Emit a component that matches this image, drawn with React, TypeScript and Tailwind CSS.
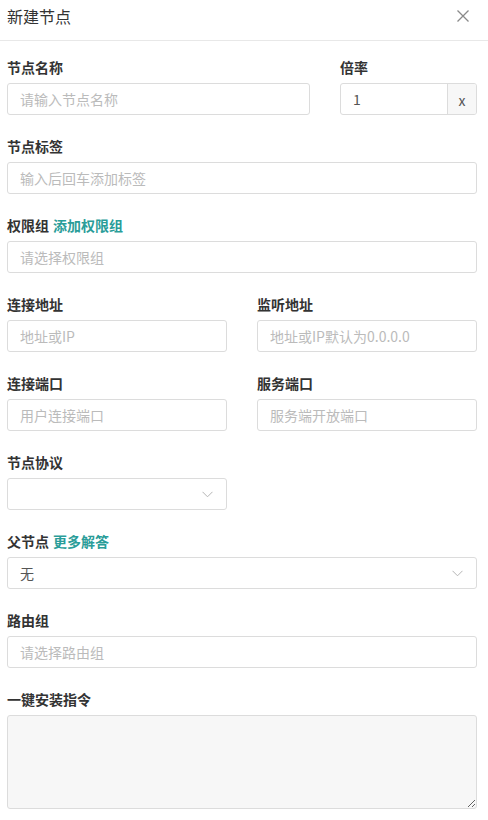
import React from "react";

const font = { fontFamily: '"Noto Sans CJK SC", "Noto Sans", sans-serif' };

function Label({ text, link }: { text: string; link?: string }) {
  return (
    <div className="h-[18px] mb-[7px] text-[14px] leading-[18px] font-bold text-[#333]">
      {text}
      {link && <span className="ml-1 text-[#2a9d99]">{link}</span>}
    </div>
  );
}

function TextInput({ placeholder, value }: { placeholder?: string; value?: string }) {
  return (
    <input
      className="block w-full min-w-0 h-8 px-3 rounded-[3px] border border-[#dcdcdc] bg-white text-[14px] text-[#555] placeholder:text-[#bbb] outline-none"
      placeholder={placeholder}
      defaultValue={value}
    />
  );
}

function Chevron() {
  return (
    <svg width="11" height="7" viewBox="0 0 11 7" fill="none" className="text-[#b5b5b5]">
      <path d="M0.5 0.8L5.5 5.8L10.5 0.8" stroke="currentColor" strokeWidth="1" />
    </svg>
  );
}

function Select({ value }: { value?: string }) {
  return (
    <div className="flex items-center justify-between h-8 pl-3 pr-[13px] rounded-[3px] border border-[#dcdcdc] bg-white text-[14px] text-[#555]">
      <span>{value}</span>
      <Chevron />
    </div>
  );
}

export default function App() {
  return (
    <div className="w-[488px] min-h-[820px] bg-white" style={font}>
      {/* Header */}
      <div className="flex items-start justify-between h-[41px] border-b border-[#e8e8e8] pl-[7px] pr-[18px] pt-[6px]">
        <h1 className="text-[16px] leading-5 text-[#333]">新建节点</h1>
        <svg width="14" height="14" viewBox="0 0 14 14" className="mt-[3px] text-[#8a8a8a]">
          <path d="M1.5 1.5L12.5 12.5M12.5 1.5L1.5 12.5" stroke="currentColor" strokeWidth="1.3" />
        </svg>
      </div>

      {/* Form */}
      <div className="pl-[7px] pr-[11px] pt-[17px] flex flex-col gap-[22px]">
        <div className="flex gap-[30px]">
          <div className="w-[303px] shrink-0">
            <Label text="节点名称" />
            <TextInput placeholder="请输入节点名称" />
          </div>
          <div className="flex-1 min-w-0">
            <Label text="倍率" />
            <div className="flex h-8 rounded-[3px] border border-[#dcdcdc] overflow-hidden">
              <input
                className="flex-1 min-w-0 w-full px-3 text-[14px] text-[#555] outline-none"
                defaultValue="1"
              />
              <div className="w-[29px] shrink-0 flex items-center justify-center border-l border-[#dcdcdc] bg-[#f7f7f7] text-[14px] text-[#555] pt-[2px]">
                x
              </div>
            </div>
          </div>
        </div>

        <div>
          <Label text="节点标签" />
          <TextInput placeholder="输入后回车添加标签" />
        </div>

        <div>
          <Label text="权限组" link="添加权限组" />
          <TextInput placeholder="请选择权限组" />
        </div>

        <div className="grid grid-cols-2 gap-x-[30px] gap-y-[22px]">
          <div>
            <Label text="连接地址" />
            <TextInput placeholder="地址或IP" />
          </div>
          <div>
            <Label text="监听地址" />
            <TextInput placeholder="地址或IP默认为0.0.0.0" />
          </div>
          <div>
            <Label text="连接端口" />
            <TextInput placeholder="用户连接端口" />
          </div>
          <div>
            <Label text="服务端口" />
            <TextInput placeholder="服务端开放端口" />
          </div>
          <div>
            <Label text="节点协议" />
            <Select />
          </div>
        </div>

        <div>
          <Label text="父节点" link="更多解答" />
          <Select value="无" />
        </div>

        <div>
          <Label text="路由组" />
          <TextInput placeholder="请选择路由组" />
        </div>

        <div>
          <Label text="一键安装指令" />
          <textarea
            readOnly
            className="block w-full h-[94px] rounded-[3px] border border-[#dcdcdc] bg-[#f7f7f7] outline-none"
          />
        </div>
      </div>
    </div>
  );
}
